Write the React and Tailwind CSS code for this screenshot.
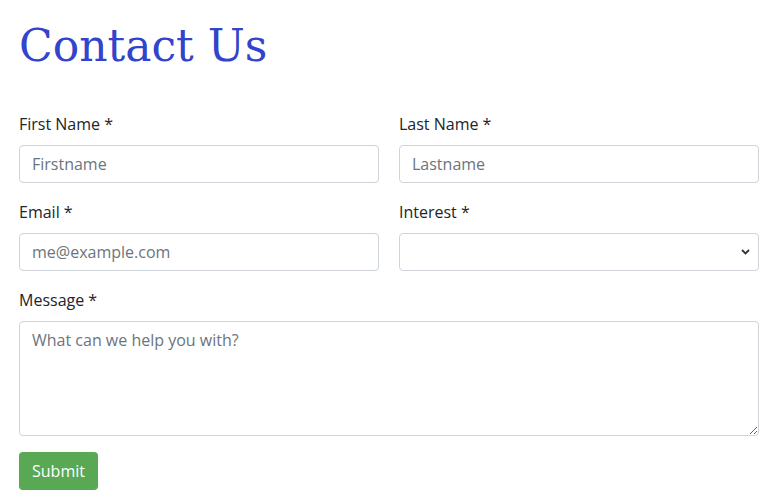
import { useState } from 'react';

const Field = ({ label, children }) => (
  <div className="flex flex-col">
    <label className="h-6 leading-[22px] mb-2 text-[16px] text-[#212529]">{label}</label>
    {children}
  </div>
);

const inputCls =
  'h-[38px] w-full rounded-[4px] border border-[#ced4da] bg-white px-3 text-[16px] text-[#212529] placeholder:text-[#6c757d] outline-none';

const App = () => {
  const [interest, setInterest] = useState('');

  return (
    <div className="min-h-[503px] bg-white pl-[19px] pt-[14px]" style={{ fontFamily: '"Open Sans", "Noto Sans", sans-serif' }}>
      <h1 className="h-[64px] text-[44px] leading-[64px] text-[#3344cc]" style={{ fontFamily: '"DejaVu Serif", serif' }}>
        Contact Us
      </h1>

      <form className="mt-[35px] w-[740px]" onSubmit={(e) => e.preventDefault()}>
        <div className="grid grid-cols-2 gap-x-5 gap-y-[18px]">
          <Field label="First Name *">
            <input className={inputCls} placeholder="Firstname" />
          </Field>
          <Field label="Last Name *">
            <input className={inputCls} placeholder="Lastname" />
          </Field>
          <Field label="Email *">
            <input className={inputCls} placeholder="me@example.com" />
          </Field>
          <Field label="Interest *">
            <div className="relative">
              <select
                value={interest}
                onChange={(e) => setInterest(e.target.value)}
                className={`${inputCls} appearance-none pr-8`}
              >
                <option value=""></option>
                <option value="sales">Sales</option>
                <option value="support">Support</option>
              </select>
              <svg className="pointer-events-none absolute right-[9px] top-[16px]" width="9" height="6" viewBox="0 0 9 6">
                <path d="M1 1l3.5 3.5L8 1" fill="none" stroke="#333" strokeWidth="1.8" />
              </svg>
            </div>
          </Field>
          <div className="col-span-2">
            <Field label="Message *">
              <textarea
                className="h-[115px] w-full rounded-[4px] border border-[#ced4da] bg-white px-3 py-[6px] text-[16px] leading-6 text-[#212529] placeholder:text-[#6c757d] outline-none"
                placeholder="What can we help you with?"
              />
            </Field>
          </div>
        </div>

        <button
          type="submit"
          className="mt-[16px] h-[38px] w-[79px] rounded-[4px] bg-[#58a854] text-[16px] text-white"
        >
          Submit
        </button>
      </form>
    </div>
  );
};

export default App;
